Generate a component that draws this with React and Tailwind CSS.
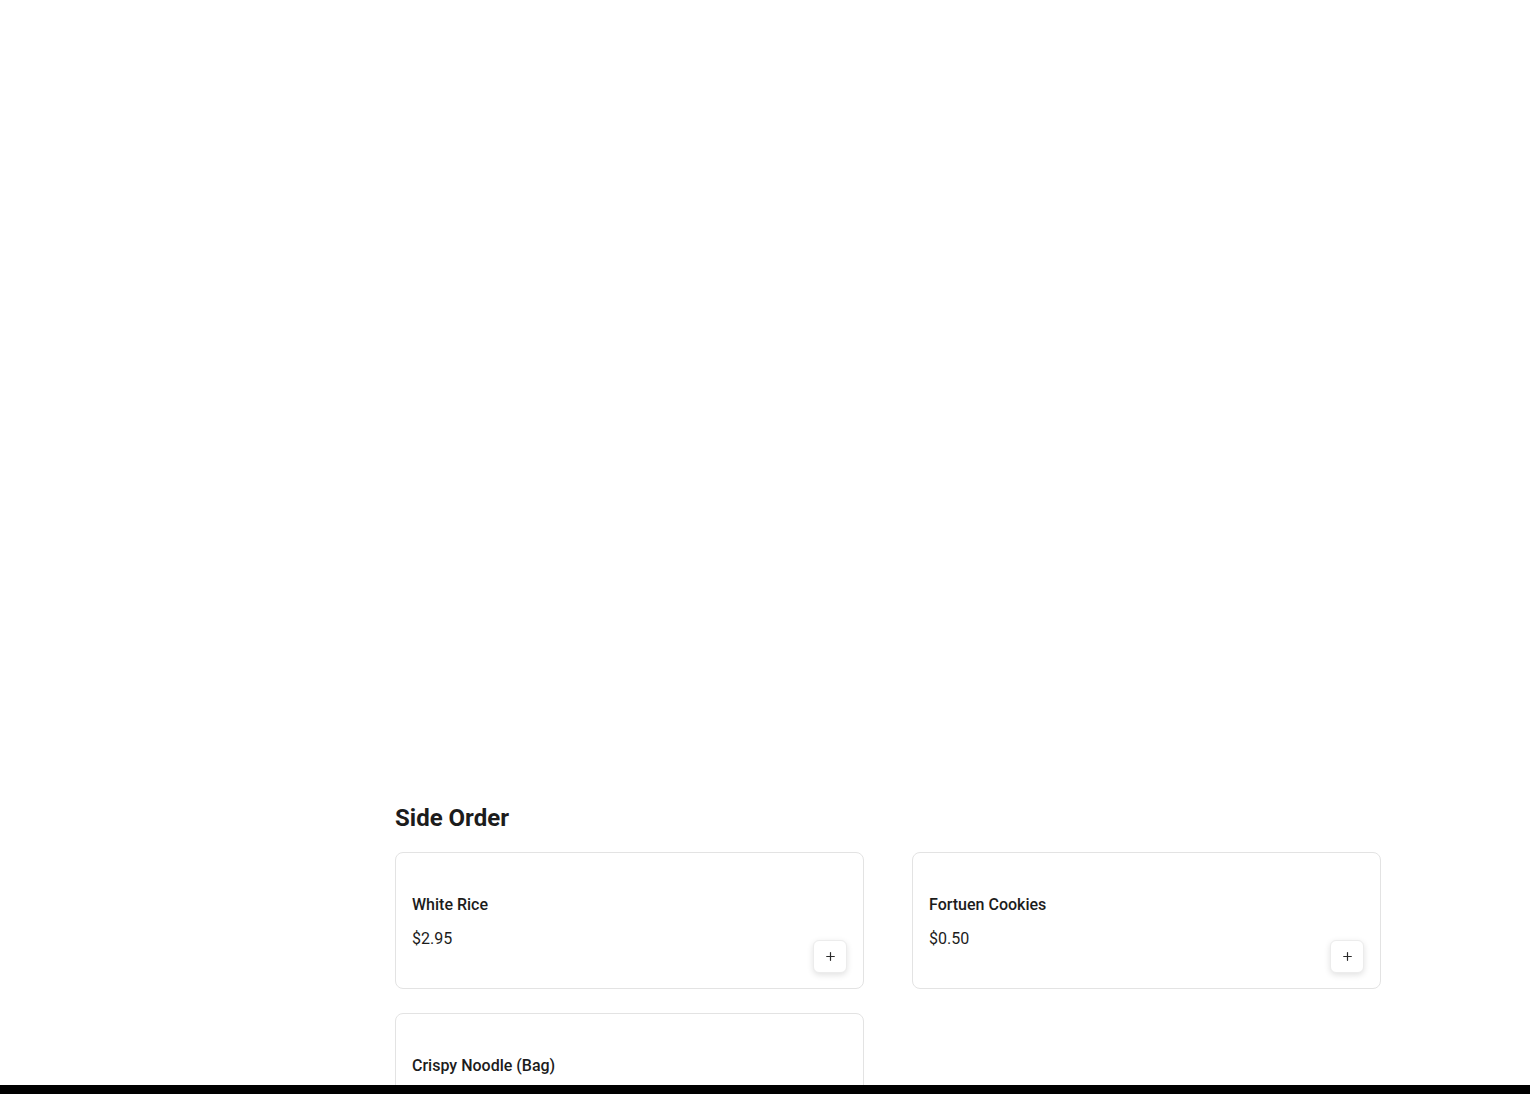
import React from 'react';
import { Plus } from 'lucide-react';

const items = [
  { id: 1, name: 'White Rice', price: '$2.95' },
  { id: 2, name: 'Fortuen Cookies', price: '$0.50' },
  { id: 3, name: 'Crispy Noodle (Bag)', price: '$3.50' },
];

const ItemCard = ({ item }) => (
  <div className="flex h-[137px] justify-between rounded-lg border border-[#e3e3e3] bg-white px-4 pb-[15px] pt-4">
    <div className="flex flex-col pt-[24px]">
      <h3 className="text-base font-medium leading-6 text-[#1c1c1c]">{item.name}</h3>
      <p className="mt-[10px] text-base leading-6 text-[#1c1c1c]">{item.price}</p>
    </div>
    <button className="flex h-[33px] w-[34px] items-center justify-center self-end rounded-md border border-[#ececec] bg-white text-[#2a2a2a] shadow-[0_2px_6px_rgba(0,0,0,0.12)]">
      <Plus size={13} strokeWidth={2.2} />
    </button>
  </div>
);

const App = () => {
  return (
    <div className="min-h-screen bg-white font-['Roboto','Liberation_Sans',sans-serif] text-[#1c1c1c]">
      <div className="ml-[395px] w-[986px] pt-[802px]">
        <h2 className="mb-[18px] text-2xl font-bold leading-8 text-[#1c1c1c]">Side Order</h2>
        <div className="grid grid-cols-2 gap-x-12 gap-y-6">
          {items.map(item => (
            <ItemCard key={item.id} item={item} />
          ))}
        </div>
      </div>
      <div className="fixed bottom-0 left-0 right-0 h-[9px] bg-black" />
    </div>
  );
};

export default App;
